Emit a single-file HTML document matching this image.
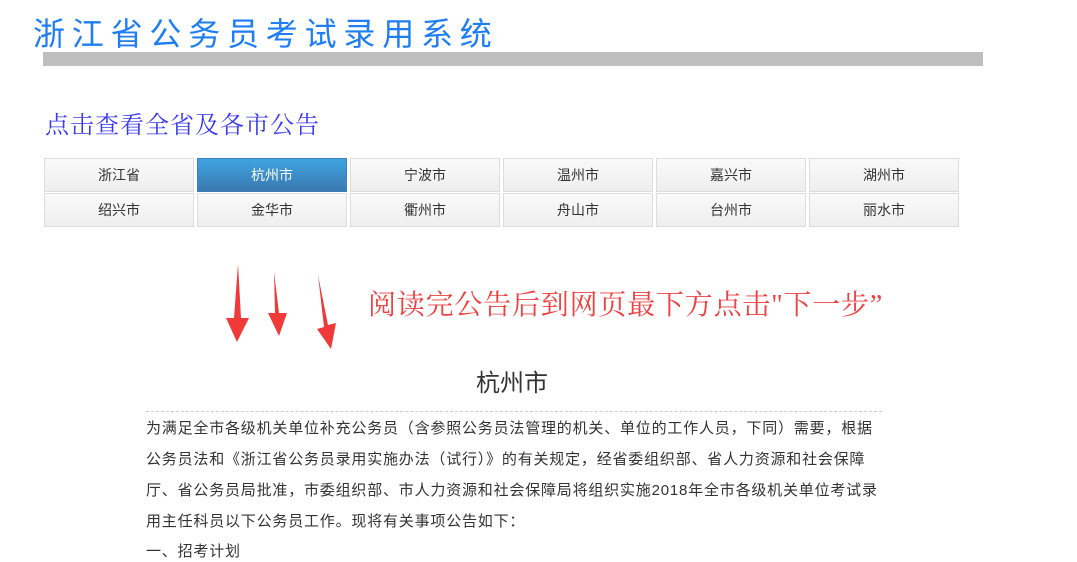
<!DOCTYPE html>
<html><head><meta charset="utf-8"><style>
body{margin:0;width:1077px;height:562px;overflow:hidden;background:#fff;font-family:"Liberation Sans","Noto Sans CJK SC",sans-serif;position:relative}
.a{position:absolute;white-space:nowrap}
.t{left:33px;top:14px;font-size:32px;letter-spacing:6.8px;color:#1e7ef5;line-height:40px}
.bar{left:43px;top:52px;width:940px;height:14px;background:#bfbfbf}
.s{left:45px;top:110px;font-size:24px;letter-spacing:1px;color:#3a3af0;line-height:32px;font-family:"Liberation Serif","Noto Serif CJK SC",serif}
.b{position:absolute;width:148px;height:32px;border:1px solid #ddd;background:linear-gradient(#fafafa,#eee);font-size:14px;color:#333;text-align:center;line-height:32px}
.b.on{background:linear-gradient(#3ea4e0,#3b78b0);color:#fff;border-color:#3a80bb}
.r{left:368px;top:288px;font-size:28px;letter-spacing:0.8px;color:#f04040;line-height:36px;font-family:"Liberation Serif","Noto Serif CJK SC",serif}
.h{left:0;width:1024px;text-align:center;top:368px;font-size:24px;color:#333;line-height:32px}
.d{left:146px;top:411px;width:736px;border-top:1px dashed #ccc}
.p{left:146px;font-size:15px;letter-spacing:0.8px;color:#333;line-height:20px}
</style></head><body>
<div class="a t">浙江省公务员考试录用系统</div>
<div class="a bar"></div>
<div class="a s">点击查看全省及各市公告</div>
<div class="b" style="left:44px;top:158px">浙江省</div>
<div class="b on" style="left:197px;top:158px">杭州市</div>
<div class="b" style="left:350px;top:158px">宁波市</div>
<div class="b" style="left:503px;top:158px">温州市</div>
<div class="b" style="left:656px;top:158px">嘉兴市</div>
<div class="b" style="left:809px;top:158px">湖州市</div>
<div class="b" style="left:44px;top:193px">绍兴市</div>
<div class="b" style="left:197px;top:193px">金华市</div>
<div class="b" style="left:350px;top:193px">衢州市</div>
<div class="b" style="left:503px;top:193px">舟山市</div>
<div class="b" style="left:656px;top:193px">台州市</div>
<div class="b" style="left:809px;top:193px">丽水市</div>
<svg class="a" style="left:0;top:0" width="1077" height="562">
<polygon fill="#f03a3a" points="238,264 241,318 249,318 237,342 226,318 234,318" />
<polygon fill="#f03a3a" points="274,272 279,313 287,313 279,336 268,313 275,313" />
<polygon fill="#f03a3a" points="318,275 328,325 336,323 331,349 317,329 324,327" />
</svg>
<div class="a r">阅读完公告后到网页最下方点击"下一步”</div>
<div class="a h">杭州市</div>
<div class="a d"></div>
<div class="a p" style="top:419px">为满足全市各级机关单位补充公务员（含参照公务员法管理的机关、单位的工作人员，下同）需要，根据</div>
<div class="a p" style="top:450px">公务员法和《浙江省公务员录用实施办法（试行）》的有关规定，经省委组织部、省人力资源和社会保障</div>
<div class="a p" style="top:481px">厅、省公务员局批准，市委组织部、市人力资源和社会保障局将组织实施2018年全市各级机关单位考试录</div>
<div class="a p" style="top:512px">用主任科员以下公务员工作。现将有关事项公告如下：</div>
<div class="a p" style="top:542px">一、招考计划</div>
</body></html>
